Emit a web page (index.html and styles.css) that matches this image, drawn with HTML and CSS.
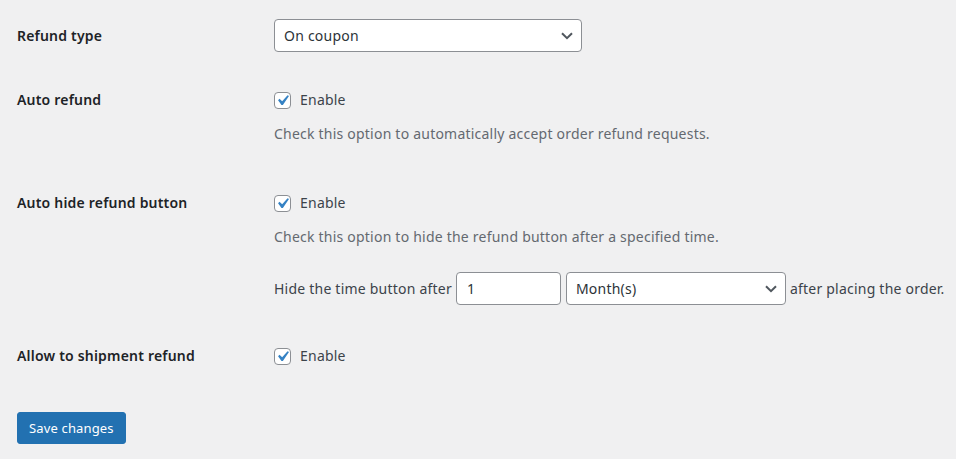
FILE: index.html
```html
<!DOCTYPE html>
<html lang="en">
<head>
<meta charset="utf-8">
<title>Refund settings</title>
<link rel="stylesheet" href="styles.css">
</head>
<body>
<form class="settings">
  <div class="row row-type">
    <div class="th">Refund type</div>
    <div class="td">
      <div class="select select-type"><span>On coupon</span><svg class="chev" width="12" height="8" viewBox="0 0 12 8"><path d="M1 1.2l5 5 5-5" fill="none" stroke="#50575e" stroke-width="2"/></svg></div>
    </div>
  </div>

  <div class="row row-auto">
    <div class="th">Auto refund</div>
    <div class="td">
      <label class="check"><span class="box"><svg width="21" height="21" viewBox="0 0 20 20"><path d="M14.83 4.89l1.34.94-5.81 8.38H9.02L5.78 9.67l1.34-1.250 2.57 2.4z" fill="#3582c4"/></svg></span>Enable</label>
      <p class="description">Check this option to automatically accept order refund requests.</p>
    </div>
  </div>

  <div class="row row-hide">
    <div class="th">Auto hide refund button</div>
    <div class="td">
      <label class="check"><span class="box"><svg width="21" height="21" viewBox="0 0 20 20"><path d="M14.83 4.89l1.34.94-5.81 8.38H9.02L5.78 9.67l1.34-1.25 2.57 2.4z" fill="#3582c4"/></svg></span>Enable</label>
      <p class="description">Check this option to hide the refund button after a specified time.</p>
      <div class="inline">
        <span>Hide the time button after</span>
        <div class="input">1</div>
        <div class="select select-unit"><span>Month(s)</span><svg class="chev" width="12" height="8" viewBox="0 0 12 8"><path d="M1 1.2l5 5 5-5" fill="none" stroke="#50575e" stroke-width="2"/></svg></div>
        <span>after placing the order.</span>
      </div>
    </div>
  </div>

  <div class="row row-ship">
    <div class="th">Allow to shipment refund</div>
    <div class="td">
      <label class="check"><span class="box"><svg width="21" height="21" viewBox="0 0 20 20"><path d="M14.83 4.89l1.34.94-5.81 8.38H9.02L5.78 9.67l1.34-1.25 2.57 2.4z" fill="#3582c4"/></svg></span>Enable</label>
    </div>
  </div>

  <div class="actions">
    <button type="button" class="button-primary">Save changes</button>
  </div>
</form>
</body>
</html>
```

FILE: styles.css
```css
* { box-sizing: border-box; }

html, body {
  margin: 0;
  background: #f0f0f1;
}

body {
  font-family: "Noto Sans", "Open Sans", sans-serif;
  font-size: 14px;
  letter-spacing: 0.22px;
  color: #3c434a;
  padding: 19px 0 0 17px;
}

.settings {
  display: flex;
  flex-direction: column;
}

.row {
  display: grid;
  grid-template-columns: 257px 1fr;
}

.th {
  font-weight: 600;
  color: #1d2327;
  line-height: 20px;
  letter-spacing: 0.2px;
}

.td {
  display: flex;
  flex-direction: column;
  align-items: flex-start;
}

.row-type .th {
  line-height: 33px;
}

.row-auto { margin-top: 38px; }
.row-hide { margin-top: 49px; }
.row-ship { margin-top: 41px; }

.select {
  display: flex;
  align-items: center;
  justify-content: space-between;
  height: 33px;
  background: #fff;
  border: 1px solid #8c8f94;
  border-radius: 4px;
  padding: 0 8px 0 9px;
  color: #2c3338;
}

.select-type { width: 308px; }
.select-unit { width: 220px; }

.check {
  display: flex;
  align-items: center;
  line-height: 20px;
  color: #3c434a;
}

.box {
  width: 17px;
  height: 17px;
  border: 1px solid #8c8f94;
  border-radius: 4px;
  background: #fff;
  margin-right: 9px;
  position: relative;
  flex: none;
}

.box svg {
  position: absolute;
  top: -3px;
  left: -3px;
}

.description {
  margin: 14px 0 0;
  line-height: 20px;
  color: #646970;
}

.inline {
  display: flex;
  align-items: center;
  margin-top: 25px;
  white-space: nowrap;
}

.input {
  width: 105px;
  height: 33px;
  margin: 0 5px 0 4px;
  background: #fff;
  border: 1px solid #8c8f94;
  border-radius: 4px;
  padding: 0 8px 0 10px;
  line-height: 31px;
  color: #2c3338;
}

.select-unit { margin-right: 4px; }

.actions {
  margin-top: 46px;
}

.button-primary {
  font-family: inherit;
  font-size: 13px;
  letter-spacing: 0.15px;
  height: 32px;
  padding: 0 11px;
  background: #2271b1;
  border: 1px solid #2271b1;
  border-radius: 3px;
  color: #fff;
  cursor: pointer;
}
```
